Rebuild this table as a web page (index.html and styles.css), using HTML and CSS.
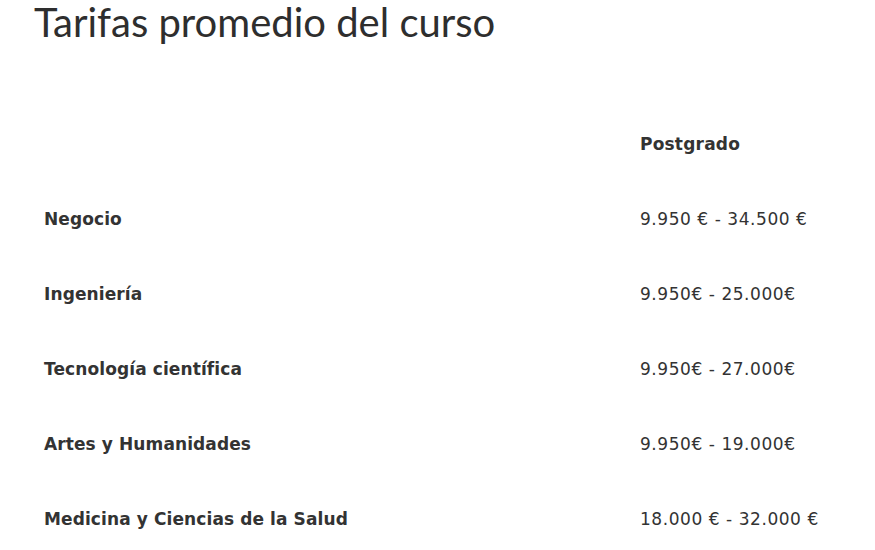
FILE: index.html
```html
<!DOCTYPE html>
<html lang="es">
<head>
<meta charset="utf-8">
<link rel="stylesheet" href="styles.css">
</head>
<body>
<div class="page">
  <h2 class="title">Tarifas promedio del curso</h2>
  <table class="fees">
    <thead>
      <tr><th class="c1"></th><th class="c2">Postgrado</th></tr>
    </thead>
    <tbody>
      <tr><td class="c1">Negocio</td><td class="c2">9.950 € - 34.500 €</td></tr>
      <tr><td class="c1">Ingeniería</td><td class="c2">9.950€ - 25.000€</td></tr>
      <tr><td class="c1">Tecnología científica</td><td class="c2">9.950€ - 27.000€</td></tr>
      <tr><td class="c1">Artes y Humanidades</td><td class="c2">9.950€ - 19.000€</td></tr>
      <tr><td class="c1">Medicina y Ciencias de la Salud</td><td class="c2">18.000 € - 32.000 €</td></tr>
    </tbody>
  </table>
</div>
</body>
</html>
```
FILE: styles.css
```css
html, body {
  margin: 0;
  padding: 0;
  background: #fff;
}
.page {
  padding-left: 34px;
  color: #333;
}
.title {
  font-family: "Lato", "Open Sans", sans-serif;
  font-weight: 400;
  font-size: 40px;
  line-height: 44px;
  margin: 0;
  color: #2e2e2e;
}
.fees {
  border-collapse: collapse;
  margin-top: 62px;
  font-family: "DejaVu Sans", Verdana, sans-serif;
  font-size: 17px;
  color: #333;
}
.fees th, .fees td {
  height: 75px;
  padding: 0 0 0 10px;
  text-align: left;
  vertical-align: middle;
}
.fees th {
  font-weight: bold;
}
.fees td.c1 {
  font-weight: bold;
  width: 586px;
  letter-spacing: 0.1px;
}
.fees th.c1 {
  width: 586px;
}
.fees td.c2 {
  letter-spacing: 0.55px;
}
.fees th.c2 {
  letter-spacing: 0.2px;
}
```
